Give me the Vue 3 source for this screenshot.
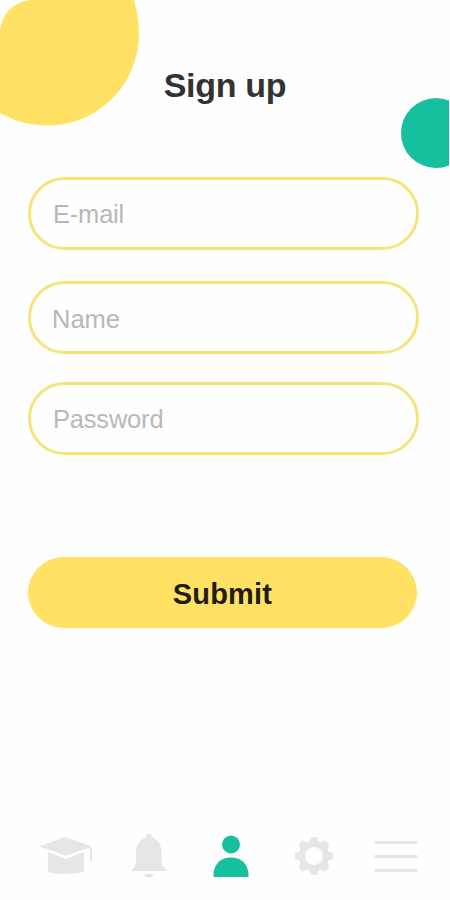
<template>
  <main class="screen">
    <svg class="blob" viewBox="0 0 142 128" aria-hidden="true">
      <path d="M0 31 Q3 4 31 0 H134 C136 7 139 20 139 35 C138 85 98 125.500 47 125.500 C29 125.500 12 120 0 113 Z" />
    </svg>
    <div class="dot"></div>

    <h1 class="title">Sign up</h1>

    <form class="form" @submit.prevent>
      <input
        v-for="field in fields"
        :key="field.name"
        v-model="form[field.name]"
        class="field"
        :class="field.name"
        :type="field.type"
        :placeholder="field.label"
      />
      <button type="submit" class="submit">Submit</button>
    </form>

    <nav class="tabs">
      <button type="button" class="tab" aria-label="Courses">
        <svg width="56" height="42" viewBox="0 0 56 42">
          <path d="M1 11.500 L27 2 L54 11.500 L28 20.500 Z" />
          <path d="M10 17 L28 24 L46 17 V37 Q28 41 10 37 Z" />
          <path class="tassel" d="M50 12 L53 13.500 V26" />
        </svg>
      </button>
      <button type="button" class="tab" aria-label="Notifications">
        <svg width="38" height="46" viewBox="0 0 38 46">
          <path d="M19 0.500 C21 0.500 22 2.500 22 4.500 C29 7 31.500 13 31.500 20 V27 C31.500 32 34 35 37 38 H1 C4 35 6 32 6 27 V20 C6 13 9 7 16 4.500 C16 2.500 17 0.500 19 0.500 Z" />
          <path d="M14.500 41 H23.500 C23 46 15 46 14.500 41 Z" />
        </svg>
      </button>
      <button type="button" class="tab active" aria-label="Profile">
        <svg width="36" height="43" viewBox="0 0 36 43">
          <circle cx="18" cy="9.500" r="9" />
          <path d="M0.500 42 V38 C2 28 8 22.500 18 22.500 C28 22.500 34 28 35.500 38 V42 Z" />
        </svg>
      </button>
      <button type="button" class="tab" aria-label="Settings">
        <svg width="40" height="40" viewBox="-20 -20 40 40">
          <circle class="ring" r="12" />
          <path v-for="n in 8" :key="n" d="M-5 -14 L-2.800 -19 H2.800 L5 -14 Z" :transform="`rotate(${n * 45})`" />
        </svg>
      </button>
      <button type="button" class="tab" aria-label="Menu">
        <svg width="44" height="33" viewBox="0 0 44 33">
          <path class="line" d="M0.500 2.500 H43.500 M0.500 16.500 H43.500 M0.500 30.500 H43.500" />
        </svg>
      </button>
    </nav>
  </main>
</template>

<script setup>
import { reactive } from 'vue';

const fields = [
  { name: 'email', label: 'E-mail', type: 'email' },
  { name: 'name', label: 'Name', type: 'text' },
  { name: 'password', label: 'Password', type: 'password' }
];

const form = reactive({ email: '', name: '', password: '' });
</script>

<style>
body {
  margin: 0;
  background: #fefefe;
}
</style>

<style scoped>
.screen {
  position: relative;
  box-sizing: border-box;
  width: 449px;
  height: 900px;
  padding: 65px 30px 21px 28px;
  display: flex;
  flex-direction: column;
  overflow: hidden;
  font-family: "Liberation Sans", Arial, sans-serif;
}

.blob {
  position: absolute;
  top: 0;
  left: 0;
  width: 142px;
  height: 128px;
  fill: #ffe164;
}

.dot {
  position: absolute;
  top: 98px;
  left: 401px;
  width: 70px;
  height: 70px;
  border-radius: 50%;
  background: #16bf9d;
}

.title {
  margin: 0 0 72px;
  padding-left: 3px;
  text-align: center;
  font-size: 34px;
  line-height: 40px;
  font-weight: 700;
  letter-spacing: -0.3px;
  color: #333;
}

.form {
  display: flex;
  flex-direction: column;
}

.field {
  box-sizing: border-box;
  width: 391px;
  height: 73px;
  margin: 0 0 31px;
  padding: 1px 22px 0;
  border: 3px solid #f5e47a;
  border-radius: 37px;
  outline: none;
  background: transparent;
  font-family: inherit;
  font-size: 25.500px;
  letter-spacing: -0.2px;
  color: #333;
}

.field.name {
  margin-bottom: 28px;
  padding: 3px 21px 0;
  letter-spacing: 0;
}

.field.password {
  margin-bottom: 102px;
}

.field::placeholder {
  color: #b8b8b8;
  opacity: 1;
}

.submit {
  width: 389px;
  height: 71px;
  padding: 4px 0 0;
  border: none;
  border-radius: 36px;
  background: #ffe164;
  font-family: inherit;
  font-size: 29px;
  font-weight: 700;
  letter-spacing: 0.2px;
  color: #211c16;
  cursor: pointer;
}

.tabs {
  display: grid;
  grid-template-columns: repeat(5, 82.500px);
  align-items: center;
  height: 46px;
  margin: auto 0 0 -3px;
}

.tab {
  display: flex;
  justify-content: center;
  padding: 0;
  border: none;
  background: none;
  color: #e6e6e6;
  cursor: pointer;
}

.tab.active {
  color: #16bf9d;
}

.tab svg {
  display: block;
  flex: none;
  fill: currentColor;
}

.tab .tassel,
.tab .ring,
.tab .line {
  fill: none;
  stroke: currentColor;
}

.tab .tassel {
  stroke-width: 2;
}

.tab .ring {
  stroke-width: 6;
}

.tab .line {
  stroke-width: 3;
}
</style>
